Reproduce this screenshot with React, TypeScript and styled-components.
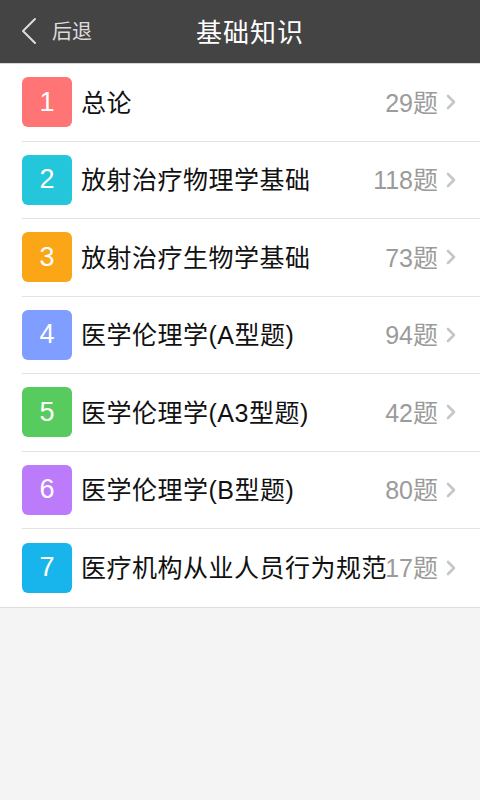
import React from "react";
import styled, { createGlobalStyle } from "styled-components";

const Global = createGlobalStyle`
  html, body { margin: 0; padding: 0; background: #f4f4f4; }
  body { font-family: "Liberation Sans", "Noto Sans CJK SC", sans-serif; }
`;

const Page = styled.div`
  width: 480px;
  min-height: 800px;
  background: #f4f4f4;
`;

const Header = styled.header`
  height: 63px;
  background: #444444;
  border-bottom: 1px solid #d6d6d6;
  display: grid;
  grid-template-columns: minmax(0, 1fr) auto minmax(0, 1fr);
  align-items: center;
`;

const Back = styled.div`
  display: flex;
  align-items: center;
  gap: 14px;
  padding-left: 20px;
  padding-bottom: 2px;
  color: #dddddd;
  font-size: 20px;
`;

const Title = styled.h1`
  margin: 0 0 3px;
  padding-left: 20px;
  color: #ffffff;
  font-size: 26px;
  font-weight: normal;
  letter-spacing: 1px;
`;

const List = styled.ul`
  list-style: none;
  margin: 0;
  padding: 0 0 0 22px;
  background: #ffffff;
  border-bottom: 1px solid #dedede;
`;

const Row = styled.li<{ $last?: boolean }>`
  height: ${(p) => (p.$last ? "77.5px" : "76.5px")};
  display: flex;
  align-items: center;
  padding-right: 24px;
  border-bottom: ${(p) => (p.$last ? "none" : "1px solid #e3e3e3")};
`;

const Badge = styled.div<{ $color: string }>`
  flex: none;
  width: 50px;
  height: 50px;
  border-radius: 6px;
  background: ${(p) => p.$color};
  color: #ffffff;
  font-size: 27px;
  display: flex;
  align-items: center;
  justify-content: center;
  margin-right: 9px;
`;

const Label = styled.span`
  flex: 1;
  min-width: 0;
  white-space: nowrap;
  font-size: 25px;
  letter-spacing: 0.5px;
  color: #111111;
  padding-bottom: 3px;
`;

const Count = styled.span`
  flex: none;
  font-size: 25px;
  color: #9b9b9b;
  margin-right: 8px;
  padding-bottom: 3px;
`;

const Chevron = () => (
  <svg width="10" height="16" viewBox="0 0 10 16" fill="none">
    <path d="M2 2 L8 8 L2 14" stroke="#c6c6c6" strokeWidth="2.6" strokeLinecap="round" strokeLinejoin="round" />
  </svg>
);

const BackArrow = () => (
  <svg width="18" height="28" viewBox="0 0 18 28" fill="none">
    <path d="M15 2 L3 14 L15 26" stroke="#dddddd" strokeWidth="2" strokeLinecap="round" strokeLinejoin="round" />
  </svg>
);

const items = [
  { n: 1, label: "总论", count: 29, color: "#ff7474" },
  { n: 2, label: "放射治疗物理学基础", count: 118, color: "#23c6da" },
  { n: 3, label: "放射治疗生物学基础", count: 73, color: "#fba617" },
  { n: 4, label: "医学伦理学(A型题)", count: 94, color: "#7f9eff" },
  { n: 5, label: "医学伦理学(A3型题)", count: 42, color: "#58cb5f" },
  { n: 6, label: "医学伦理学(B型题)", count: 80, color: "#bc7bfb" },
  { n: 7, label: "医疗机构从业人员行为规范", count: 17, color: "#18b4ec" },
];

export default function App() {
  return (
    <Page>
      <Global />
      <Header>
        <Back>
          <BackArrow />
          <span>后退</span>
        </Back>
        <Title>基础知识</Title>
        <div />
      </Header>
      <List>
        {items.map((it, i) => (
          <Row key={it.n} $last={i === items.length - 1}>
            <Badge $color={it.color}>{it.n}</Badge>
            <Label>{it.label}</Label>
            <Count>{it.count}题</Count>
            <Chevron />
          </Row>
        ))}
      </List>
    </Page>
  );
}
